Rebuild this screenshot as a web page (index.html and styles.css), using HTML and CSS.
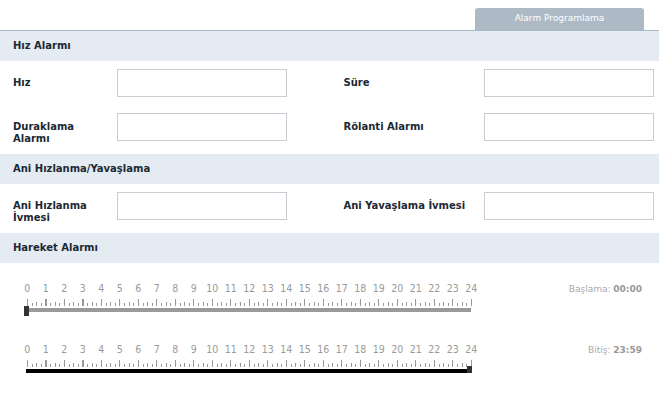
FILE: index.html
```html
<!DOCTYPE html>
<html lang="tr">
<head>
    <meta charset="UTF-8">
    <meta name="viewport" content="width=device-width, initial-scale=1.0">
    <title>Alarm Programlama</title>
    <link rel="stylesheet" href="styles.css">
</head>
<body>
    <!-- Tab Bar -->
    <div class="tabbar">
        <div class="tab">Alarm Programlama</div>
    </div>

    <!-- Speed Alarm -->
    <div class="section-title">Hız Alarmı</div>
    <div class="fields">
        <div class="field-row">
            <div class="field left"><label>Hız</label><input type="text"></div>
            <div class="field right"><label>Süre</label><input type="text"></div>
        </div>
        <div class="field-row">
            <div class="field left"><label>Duraklama Alarmı</label><input type="text"></div>
            <div class="field right"><label>Rölanti Alarmı</label><input type="text"></div>
        </div>
    </div>

    <!-- Acceleration -->
    <div class="section-title">Ani Hızlanma/Yavaşlama</div>
    <div class="fields">
        <div class="field-row">
            <div class="field left"><label>Ani Hızlanma İvmesi</label><input type="text"></div>
            <div class="field right"><label>Ani Yavaşlama İvmesi</label><input type="text"></div>
        </div>
    </div>

    <!-- Movement Alarm -->
    <div class="section-title">Hareket Alarmı</div>
    <div class="rulers">
        <div class="ruler-row">
            <div class="ruler">
                <div class="scale">
                    <span>0</span><span>1</span><span>2</span><span>3</span><span>4</span>
                    <span>5</span><span>6</span><span>7</span><span>8</span><span>9</span>
                    <span>10</span><span>11</span><span>12</span><span>13</span><span>14</span>
                    <span>15</span><span>16</span><span>17</span><span>18</span><span>19</span>
                    <span>20</span><span>21</span><span>22</span><span>23</span><span>24</span>
                </div>
                <div class="ticks"></div>
                <div class="track start"><span class="handle"></span></div>
            </div>
            <div class="time">Başlama: <b>00:00</b></div>
        </div>

        <div class="ruler-row">
            <div class="ruler">
                <div class="scale">
                    <span>0</span><span>1</span><span>2</span><span>3</span><span>4</span>
                    <span>5</span><span>6</span><span>7</span><span>8</span><span>9</span>
                    <span>10</span><span>11</span><span>12</span><span>13</span><span>14</span>
                    <span>15</span><span>16</span><span>17</span><span>18</span><span>19</span>
                    <span>20</span><span>21</span><span>22</span><span>23</span><span>24</span>
                </div>
                <div class="ticks"></div>
                <div class="track end"><span class="handle"></span></div>
            </div>
            <div class="time">Bitiş: <b>23:59</b></div>
        </div>
    </div>
</body>
</html>
```

FILE: styles.css
```css
/* General Reset */
* {
    margin: 0;
    padding: 0;
    box-sizing: border-box;
}

body {
    font-family: 'DejaVu Sans', 'Liberation Sans', sans-serif;
    background-color: #fff;
    color: #1c2833;
    width: 659px;
}

/* Tab Bar */
.tabbar {
    display: flex;
    justify-content: flex-end;
    padding-top: 8px;
    padding-right: 15px;
    border-bottom: 1px solid #aab7c4;
}

.tab {
    width: 169px;
    height: 22px;
    line-height: 21px;
    background-color: #adbac6;
    border-radius: 3px 3px 0 0;
    color: #fff;
    font-size: 9px;
    text-align: center;
}

/* Section Headers */
.section-title {
    height: 30px;
    line-height: 30px;
    padding-left: 13px;
    background-color: #e4ebf2;
    font-size: 10px;
    font-weight: bold;
}

/* Form Fields */
.fields {
    display: flex;
    flex-direction: column;
    gap: 16px;
    padding: 8px 0 13px;
}

.field-row {
    display: flex;
    height: 28px;
}

.field {
    display: flex;
    align-items: flex-start;
    width: 330px;
}

.field label {
    font-size: 10px;
    font-weight: bold;
    line-height: 12px;
    padding-top: 8px;
}

.field.left {
    padding-left: 13px;
}

.field.left label {
    width: 90px;
    margin-right: 14px;
}

.field.right {
    padding-left: 14px;
}

.field.right label {
    width: 140px;
}

.field input {
    width: 170px;
    height: 28px;
    border: 1px solid #c9ccd2;
    background-color: #fff;
}

/* Time Rulers */
.rulers {
    display: flex;
    flex-direction: column;
    gap: 31px;
    padding-top: 19px;
}

.ruler-row {
    display: flex;
    justify-content: space-between;
    padding: 0 17px 0 18px;
}

.scale {
    display: grid;
    grid-template-columns: repeat(25, 18.5px);
    font-family: 'DejaVu Sans Condensed', 'DejaVu Sans', sans-serif;
    font-size: 10.5px;
    line-height: 13px;
    color: #9a9a9a;
    text-align: center;
    white-space: nowrap;
}

.ticks {
    width: 446px;
    height: 7px;
    margin: 4px 0 0 9px;
    background-image:
        repeating-linear-gradient(to right, #999 0 1px, transparent 1px 18.5px),
        repeating-linear-gradient(to right, transparent 0 9.25px, #999 9.25px 10.25px, transparent 10.25px 18.5px),
        repeating-linear-gradient(to right, transparent 0 4.625px, #999 4.625px 5.625px, transparent 5.625px 9.25px);
    background-size: 100% 7px, 100% 4px, 100% 3px;
    background-position: left bottom;
    background-repeat: no-repeat;
}

.track {
    position: relative;
    width: 445px;
    height: 4px;
    margin: 2px 0 0 8px;
    background-color: #999;
}

.track.end {
    width: 442px;
    background-color: #000;
}

.handle {
    position: absolute;
    top: -2px;
    width: 5px;
    height: 10px;
    background-color: #333;
}

.track.start .handle {
    left: -2px;
}

.track.end .handle {
    left: 441px;
    top: -3px;
}

.time {
    font-size: 9px;
    line-height: 13px;
    padding-top: 1px;
    color: #aaa;
}

.time b {
    color: #999;
}
```
